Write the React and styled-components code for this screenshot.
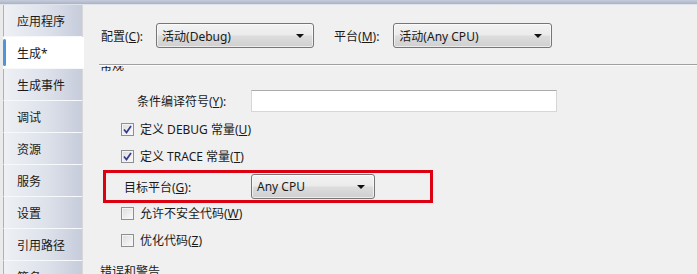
import React from "react";
import styled, { createGlobalStyle } from "styled-components";

const GlobalStyle = createGlobalStyle`
  html, body {
    margin: 0;
    padding: 0;
    background: #f0f0f0;
  }
  body {
    font-family: "Noto Sans", "Noto Sans CJK SC", sans-serif;
    font-size: 12px;
    color: #1a1a1a;
  }
`;

const Window = styled.div`
  width: 697px;
  height: 274px;
  overflow: hidden;
  display: flex;
  flex-direction: column;
  background: #f0f0f0;
`;

const TopBand = styled.div`
  height: 4px;
  flex: none;
  background: linear-gradient(#c6ccda, #aab3c7);
  border-bottom: 1px solid #dfe3ea;
`;

const Body = styled.div`
  flex: 1;
  display: flex;
  min-height: 0;
`;

const Sidebar = styled.div`
  width: 82px;
  flex: none;
  display: flex;
  flex-direction: column;
  padding-left: 3px;
  box-sizing: border-box;
  background: #ebebeb;
`;

const Tab = styled.div`
  position: relative;
  height: 31px;
  flex: none;
  display: flex;
  align-items: center;
  padding-left: 13px;
  border-left: 1px solid ${(p) => (p.$active ? "#ffffff" : "#a9b1c2")};
  border-bottom: 1px solid #f7f8fb;
  margin-right: ${(p) => (p.$active ? "-2px" : "0")};
  background: ${(p) =>
    p.$active
      ? "#ffffff"
      : "linear-gradient(to right, #eef0f5 0%, #dde1ea 55%, #c6ccdb 100%)"};
  white-space: nowrap;

  &::before {
    content: "";
    display: ${(p) => (p.$active ? "block" : "none")};
    position: absolute;
    left: -1px;
    top: 2px;
    bottom: 2px;
    width: 3px;
    border-radius: 2px;
    background: #4f95dc;
  }
`;

const Content = styled.div`
  flex: 1;
  display: flex;
  flex-direction: column;
  border-left: 1px solid #d8d8d8;
  min-width: 0;
`;

const Header = styled.div`
  height: 59px;
  flex: none;
  display: flex;
  align-items: center;
  padding: 2px 0 0 18px;
  box-sizing: border-box;
`;

const HeaderLabel = styled.span`
  margin-right: ${(p) => p.$gap}px;
  margin-left: ${(p) => p.$lead || 0}px;
`;

const Select = styled.div`
  width: ${(p) => p.$w}px;
  height: 25px;
  box-sizing: border-box;
  display: flex;
  align-items: center;
  justify-content: space-between;
  padding: 0 9px 0 5px;
  border: 1px solid #767676;
  border-radius: 3px;
  background: linear-gradient(#f3f3f3 0%, #ebebeb 48%, #dddddd 52%, #cfcfcf 100%);
  box-shadow: inset 0 0 0 1px rgba(255, 255, 255, 0.6);
  flex: none;
`;

const Arrow = styled.span`
  width: 0;
  height: 0;
  border-left: 4px solid transparent;
  border-right: 4px solid transparent;
  border-top: 4px solid #111;
`;

const Separator = styled.div`
  height: 1px;
  flex: none;
  margin-left: 16px;
  background: #a0a0a0;
  border-bottom: 1px solid #fbfbfb;
`;

const ScrollArea = styled.div`
  flex: 1;
  overflow: hidden;
  display: flex;
  flex-direction: column;
  padding-left: 17px;
`;

const GroupTitle = styled.div`
  height: 16px;
  line-height: 16px;
  flex: none;
  display: flex;
  align-items: center;
  gap: 6px;
  margin-top: ${(p) => p.$mt}px;

  &::after {
    content: "";
    display: ${(p) => (p.$line ? "block" : "none")};
    width: 468px;
    height: 1px;
    align-self: flex-end;
    background: #a0a0a0;
    margin-bottom: 1px;
  }
`;

const Row = styled.div`
  display: flex;
  align-items: center;
  flex: none;
  height: ${(p) => p.$h || 14}px;
  margin-top: ${(p) => p.$mt}px;
  padding-left: ${(p) => p.$indent}px;
`;

const FieldLabel = styled.span`
  width: ${(p) => p.$w}px;
  flex: none;
`;

const TextInput = styled.div`
  width: 306px;
  height: 22px;
  box-sizing: border-box;
  background: #fff;
  border: 1px solid #d6d6d6;
  border-top-color: #ababab;
`;

const Highlight = styled.div`
  width: 330px;
  height: 33px;
  box-sizing: border-box;
  border: 3px solid #dc0010;
  flex: none;
  display: flex;
  align-items: center;
  padding-left: 18px;
  margin-top: 7px;
  margin-left: 3px;
`;

const Box = styled.span`
  width: 13px;
  height: 13px;
  box-sizing: border-box;
  border: 1px solid #8e8f8f;
  background: linear-gradient(135deg, #dcdcdc, #fbfbfb);
  box-shadow: inset 0 0 0 1px #f4f4f4;
  display: flex;
  align-items: center;
  justify-content: center;
  margin-right: 6px;
  flex: none;
`;

const CheckMark = () => (
  <svg width="9" height="9" viewBox="0 0 9 9">
    <path d="M1 4.5 L3.5 7.5 L8 1" fill="none" stroke="#353a8c" strokeWidth="1.7" />
  </svg>
);

const Check = ({ checked, children, mt }) => (
  <Row $mt={mt} $indent={21}>
    <Box>{checked && <CheckMark />}</Box>
    <span>{children}</span>
  </Row>
);

const tabs = ["应用程序", "生成*", "生成事件", "调试", "资源", "服务", "设置", "引用路径", "签名"];

export default function App() {
  return (
    <>
      <GlobalStyle />
      <Window>
        <TopBand />
        <Body>
          <Sidebar>
            {tabs.map((t) => (
              <Tab key={t} $active={t === "生成*"}>
                {t}
              </Tab>
            ))}
          </Sidebar>
          <Content>
            <Header>
              <HeaderLabel $gap={13}>
                配置(<u>C</u>):
              </HeaderLabel>
              <Select $w={158}>
                <span>活动(Debug)</span>
                <Arrow />
              </Select>
              <HeaderLabel $gap={14} $lead={20}>
                平台(<u>M</u>):
              </HeaderLabel>
              <Select $w={159}>
                <span>活动(Any CPU)</span>
                <Arrow />
              </Select>
            </Header>
            <Separator />
            <ScrollArea>
              <GroupTitle $mt={-8}>常规</GroupTitle>
              <Row $mt={16} $h={22} $indent={37}>
                <FieldLabel $w={114}>
                  条件编译符号(<u>Y</u>):
                </FieldLabel>
                <TextInput />
              </Row>
              <Check checked mt={10}>
                定义 DEBUG 常量(<u>U</u>)
              </Check>
              <Check checked mt={13}>
                定义 TRACE 常量(<u>T</u>)
              </Check>
              <Highlight>
                <FieldLabel $w={127}>
                  目标平台(<u>G</u>):
                </FieldLabel>
                <Select $w={124}>
                  <span>Any CPU</span>
                  <Arrow />
                </Select>
              </Highlight>
              <Check mt={3}>
                允许不安全代码(<u>W</u>)
              </Check>
              <Check mt={13}>
                优化代码(<u>Z</u>)
              </Check>
              <GroupTitle $mt={17} $line>
                错误和警告
              </GroupTitle>
            </ScrollArea>
          </Content>
        </Body>
      </Window>
    </>
  );
}
